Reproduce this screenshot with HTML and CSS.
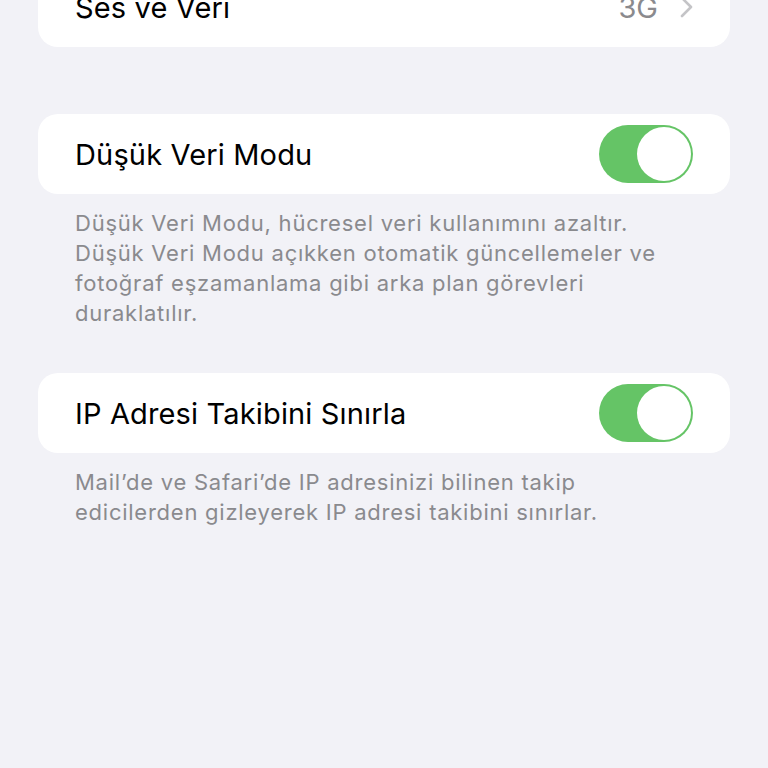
FILE: index.html
```html
<!DOCTYPE html>
<html lang="tr">
<head>
  <meta charset="UTF-8" />
  <meta name="viewport" content="width=device-width, initial-scale=1.0"/>
  <title>Hücresel Veri Seçenekleri</title>
  <link rel="stylesheet" href="styles.css">
</head>
<body>
  <div class="settings">

    <div class="group group-top">
      <div class="card">
        <div class="row">
          <span class="label">Ses ve Veri</span>
          <span class="detail">
            3G
            <svg class="chevron" width="13" height="22" viewBox="0 0 13 22">
              <path d="M2 2 L11 11 L2 20" fill="none" stroke="#c4c4c7" stroke-width="2.6" stroke-linecap="round" stroke-linejoin="round"/>
            </svg>
          </span>
        </div>
      </div>
    </div>

    <div class="group">
      <div class="card">
        <div class="row">
          <span class="label">Düşük Veri Modu</span>
          <div class="switch on"><div class="knob"></div></div>
        </div>
      </div>
      <p class="footer">Düşük Veri Modu, hücresel veri kullanımını azaltır. Düşük Veri Modu açıkken otomatik güncellemeler ve fotoğraf eşzamanlama gibi arka plan görevleri duraklatılır.</p>
    </div>

    <div class="group group-ip">
      <div class="card">
        <div class="row">
          <span class="label">IP Adresi Takibini Sınırla</span>
          <div class="switch on"><div class="knob"></div></div>
        </div>
      </div>
      <p class="footer">Mail’de ve Safari’de IP adresinizi bilinen takip edicilerden gizleyerek IP adresi takibini sınırlar.</p>
    </div>

  </div>
</body>
</html>
```

FILE: styles.css
```css
* {
  margin: 0;
  padding: 0;
  box-sizing: border-box;
}

body {
  background: #f2f2f7;
  font-family: Inter, "Noto Sans", sans-serif;
  height: 768px;
  overflow: hidden;
}

.settings {
  padding: 0 38px;
}

.group {
  margin-top: 67px;
}

/* first group is scrolled mostly out of view */
.group-top {
  margin-top: -33px;
}

.group-ip {
  margin-top: 45px;
}

.card {
  background: #ffffff;
  border-radius: 20px;
}

.row {
  height: 80px;
  display: flex;
  align-items: center;
  justify-content: space-between;
  padding: 0 37px;
}

.label {
  font-size: 29px;
  color: #000000;
  letter-spacing: 0.15px;
}

.detail {
  display: flex;
  align-items: center;
  gap: 22px;
  font-size: 29px;
  color: #8a8a8e;
}

.chevron {
  display: block;
}

.switch {
  width: 94px;
  height: 58px;
  border-radius: 29px;
  background: #e9e9eb;
  padding: 2px;
  display: flex;
}

.switch.on {
  background: #65c466;
  justify-content: flex-end;
}

.switch .knob {
  width: 54px;
  height: 54px;
  border-radius: 50%;
  background: #ffffff;
}

.footer {
  padding: 14px 37px 0;
  font-size: 22px;
  line-height: 30px;
  letter-spacing: 0.75px;
  color: #8a8a8e;
}
```
